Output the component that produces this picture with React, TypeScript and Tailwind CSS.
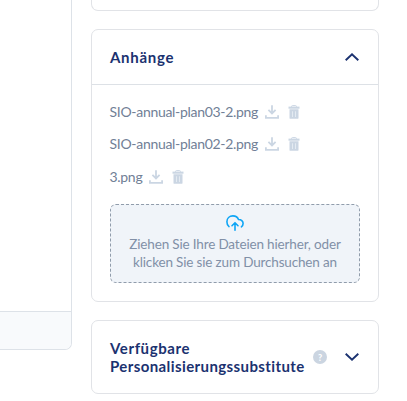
import React from "react";

function DownloadIcon() {
  return (
    <svg width="14" height="14" viewBox="0 0 14 14" fill="none" stroke="#cbd6e3" className="shrink-0">
      <path d="M7 0.2V8.4M3.4 4.9L7 8.5L10.6 4.9" strokeWidth="1.8" />
      <path d="M0.9 10.2V12.9H13.1V10.2" strokeWidth="1.8" />
    </svg>
  );
}

function TrashIcon() {
  return (
    <svg width="12" height="14" viewBox="0 0 12 14" fill="none" className="shrink-0">
      <path d="M3.6 2V1.4Q3.6 0.6 4.4 0.6H7.6Q8.4 0.6 8.4 1.4V2" stroke="#cbd6e3" />
      <path d="M0.5 1.6H11.5V3.7H0.5Z" fill="#cbd6e3" />
      <path d="M1.5 4.2H10.5V12.9Q10.5 13.8 9.6 13.8H2.4Q1.5 13.8 1.5 12.9Z" fill="#cbd6e3" />
      <path d="M4.5 6.3V12M7.5 6.3V12" stroke="#e4ebf2" strokeWidth="1" />
    </svg>
  );
}

function Chevron({ up = false }: { up?: boolean }) {
  return (
    <svg width="14" height="8" viewBox="0 0 14 8" fill="none" stroke="#1b3270" strokeWidth="1.9" className="shrink-0">
      <path d={up ? "M0.7 7.3L7 1.3L13.3 7.3" : "M0.7 0.7L7 6.7L13.3 0.7"} />
    </svg>
  );
}

function FileRow({ name, width }: { name: string; width: string }) {
  return (
    <div className="flex h-[18px] items-center text-[14px] leading-[18px] tracking-[-0.3px] text-[#718096]">
      <span className={`${width} -ml-[0.5px] whitespace-nowrap`}>{name}</span>
      <span className="ml-[7px] flex gap-[9px]">
        <DownloadIcon />
        <TrashIcon />
      </span>
    </div>
  );
}

export default function App() {
  return (
    <div className="flex h-[401px] w-[407px] items-start gap-[19px] overflow-hidden bg-white font-['Lato','Liberation_Sans',sans-serif] [font-variant-ligatures:none]">
      <div className="h-[350px] w-[72px] shrink-0 overflow-hidden rounded-br-[7px] border-r border-b border-[#dde2e8]">
        <div className="h-[311px]" />
        <div className="h-[38px] border-t border-[#dde2e8] bg-[#f8fafc]" />
      </div>
      <div className="flex w-[288px] shrink-0 flex-col">
        <div className="h-[11px] rounded-b-[7px] border border-t-0 border-[#e1e3e7]" />
        <section className="mt-[18px] h-[273px] rounded-[7px] border border-[#e1e3e7]">
          <header className="flex h-[55px] items-center justify-between border-b border-[#dde1e6] pr-[19px] pl-[18px]">
            <h2 className="text-[15px] font-bold tracking-[0.7px] text-[#1b3270]">Anhänge</h2>
            <Chevron up />
          </header>
          <div className="px-[18px] pt-[18px]">
            <div className="flex flex-col gap-[14px]">
              <FileRow name="SIO-annual-plan03-2.png" width="w-[148.5px]" />
              <FileRow name="SIO-annual-plan02-2.png" width="w-[148.5px]" />
              <div className="pt-px">
                <FileRow name="3.png" width="w-[32.5px]" />
              </div>
            </div>
            <div className="mt-[18px] flex h-[79px] w-[250px] flex-col items-center rounded-[6px] border border-dashed border-[#909cab] bg-[#f0f4f9] pt-[10px]">
              <svg width="18" height="16" viewBox="0 0 18 16" fill="none" stroke="#0ea5f5" strokeWidth="1.6" strokeLinecap="round" strokeLinejoin="round">
                <path d="M3 11.6C1.6 10.7 0.9 9.2 0.9 6.8C0.9 3.3 3.5 0.9 6.9 0.9C9.5 0.9 11.6 2.2 12.5 4.5C15.2 4.4 17.1 6.2 17.1 8.6C17.1 10 16.6 11 15.4 11.8" />
                <path d="M9 15.2V8M6 10.7L9 7.7L12 10.7" />
              </svg>
              <p className="mt-[4px] text-center text-[13.5px] leading-[18px] tracking-[-0.16px] whitespace-nowrap text-[#8190a7]">
                Ziehen Sie Ihre Dateien hierher, oder
                <br />
                klicken Sie sie zum Durchsuchen an
              </p>
            </div>
          </div>
        </section>
        <section className="mt-[18px] flex h-[74px] items-center rounded-[7px] border border-[#e1e3e7] pr-[19px] pl-[18px]">
          <h2 className="w-[195px] text-[15px] leading-[18px] font-bold tracking-[0.4px] text-[#1b3270]">
            <span className="tracking-[0.6px]">Verfügbare</span>
            <br />
            Personalisierungssubstitute
          </h2>
          <span className="ml-[8px] flex size-[14px] items-center justify-center rounded-full bg-[#cbd5e1] text-[9px] leading-none font-black text-white">?</span>
          <span className="ml-auto">
            <Chevron />
          </span>
        </section>
      </div>
    </div>
  );
}
